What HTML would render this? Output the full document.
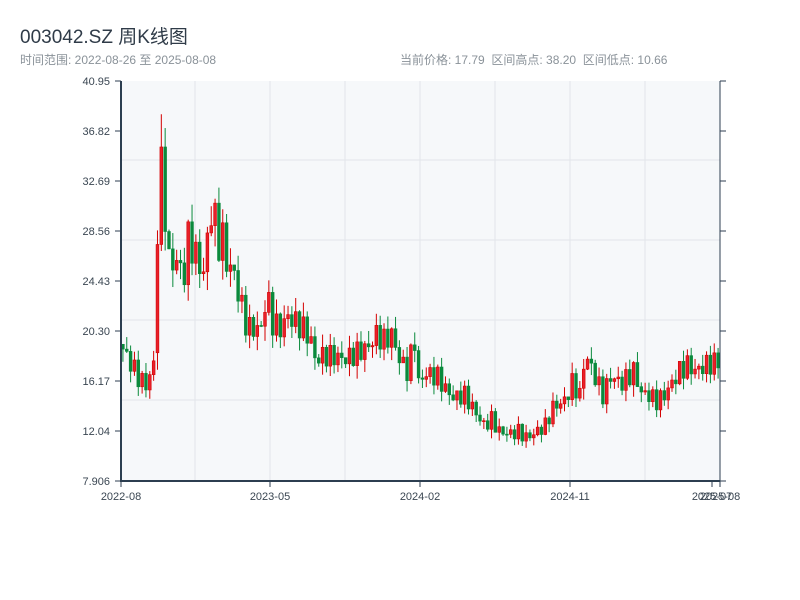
<!DOCTYPE html>
<html><head><meta charset="utf-8">
<style>
body{margin:0;width:800px;height:600px;background:#fff;font-family:"Liberation Sans","Noto Sans CJK SC",sans-serif;overflow:hidden;position:relative}
.t{position:absolute;left:20px;top:22px;font-size:19px;color:#2f3b48}
.s{position:absolute;top:51px;font-size:12px;color:#8a9299}
svg{position:absolute;left:0;top:0}
</style></head><body>
<div class="t">003042.SZ 周K线图</div>
<div class="s" style="left:20px">时间范围: 2022-08-26 至 2025-08-08</div>
<div class="s" style="left:400px">当前价格: 17.79 &nbsp;区间高点: 38.20 &nbsp;区间低点: 10.66</div>
<svg id="c" width="800" height="600" xmlns="http://www.w3.org/2000/svg"></svg>
<script>
var L=121,R=720,T=81,B=481,pmax=40.95,pmin=7.906;
function Y(p){return T+(pmax-p)*(B-T)/(pmax-pmin);}
var s='<rect x="'+L+'" y="'+T+'" width="'+(R-L)+'" height="'+(B-T)+'" fill="#f6f8fa"/>';
[160,240,320,400].forEach(function(y){s+='<line x1="'+L+'" x2="'+R+'" y1="'+y+'" y2="'+y+'" stroke="#e2e5ea" stroke-width="1"/>';});
[195,270,345,420,495,570,645].forEach(function(x){s+='<line y1="'+T+'" y2="'+B+'" x1="'+x+'" x2="'+x+'" stroke="#e2e5ea" stroke-width="1"/>';});
var kp=[[0,18.8],[4,16.5],[6,15.8],[8,17.5],[9,28.5],[10,35],[11,30],[12,26],[14,26],[16,25],[17,28],[19,26.5],[21,25],[22,28],[23,30],[24,29.5],[25,27.5],[26,28],[27,26],[29,25],[30,23.5],[32,21],[33,20.5],[36,20.5],[37,22.5],[38,22.5],[39,21],[41,20.5],[43,21.5],[45,21],[47,20.5],[49,19.5],[50,18],[53,18.3],[58,18],[61,18.5],[64,19],[66,20],[68,19.5],[70,20],[72,18],[74,17],[76,19.5],[77,16],[79,16.8],[82,16.5],[84,15.5],[86,14.8],[89,15],[91,14],[94,12.5],[96,13],[98,12],[101,11.8],[103,12],[105,11.5],[107,11.8],[110,12.5],[112,14],[115,14.5],[117,16],[119,15],[120,17.5],[121,18],[123,16.5],[125,15],[127,16.5],[130,16],[133,17],[135,15.2],[137,15],[139,14.5],[141,15],[143,16],[145,17],[147,17.5],[149,17],[152,17.5],[155,17.8]];
var N=156,cl=[];
for(var i=0;i<N;i++){var k=0;while(k<kp.length-1&&kp[k+1][0]<i)k++;var a=kp[k],b=kp[Math.min(k+1,kp.length-1)];var v=a[1];if(b[0]>a[0])v=a[1]+(b[1]-a[1])*(i-a[0])/(b[0]-a[0]);v+=Math.sin(i*2.7)*0.9*(v/18);cl.push(v);}
cl[10]=35.5;
var w=(R-L)/N;
for(var i=0;i<N;i++){
 var c=cl[i],o=i?cl[i-1]:19.2;
 if(i==9)o=18.5;
 var hi=Math.max(o,c)+Math.abs(Math.sin(i*1.3))*1.0*(c/18),lo=Math.min(o,c)-Math.abs(Math.cos(i*1.7))*1.0*(c/18);
 if(i==10)hi=38.2;
 var up=c>=o,col=up?'#d40000':'#0a8a3c';
 var x=L+i*w+w/2;
 s+='<line x1="'+x+'" x2="'+x+'" y1="'+Y(hi)+'" y2="'+Y(lo)+'" stroke="'+col+'" stroke-width="1"/>';
 var y1=Y(Math.max(o,c)),h=Math.max(1,Y(Math.min(o,c))-y1);
 s+='<rect x="'+(x-1.4)+'" y="'+y1+'" width="2.8" height="'+h+'" fill="'+(up?'#e8202a':col)+'" stroke="'+col+'" stroke-width="0.6"/>';
}
s+='<line x1="'+L+'" x2="'+L+'" y1="'+T+'" y2="'+(B+1)+'" stroke="#2c3e50" stroke-width="2"/>';
s+='<line x1="'+R+'" x2="'+R+'" y1="'+T+'" y2="'+B+'" stroke="#2c3e50" stroke-width="1"/>';
s+='<line x1="'+L+'" x2="'+R+'" y1="'+B+'" y2="'+B+'" stroke="#2c3e50" stroke-width="2"/>';
var labs=['40.95','36.82','32.69','28.56','24.43','20.30','16.17','12.04','7.906'];
for(var j=0;j<9;j++){var y=T+j*50;
 s+='<line x1="'+(L-6)+'" x2="'+L+'" y1="'+y+'" y2="'+y+'" stroke="#2c3e50"/>';
 s+='<line x1="'+R+'" x2="'+(R+6)+'" y1="'+y+'" y2="'+y+'" stroke="#2c3e50"/>';
 s+='<text x="'+(L-11)+'" y="'+(y+4)+'" font-size="11" fill="#3a4652" text-anchor="end" font-family="Liberation Sans">'+labs[j]+'</text>';}
[[121,'2022-08'],[270,'2023-05'],[420,'2024-02'],[570,'2024-11'],[712,'2025-07'],[720,'2025-08']].forEach(function(t){
 s+='<line x1="'+t[0]+'" x2="'+t[0]+'" y1="'+B+'" y2="'+(B+6)+'" stroke="#2c3e50"/>';
 s+='<text x="'+t[0]+'" y="'+(B+19)+'" font-size="11" fill="#3a4652" text-anchor="middle" font-family="Liberation Sans">'+t[1]+'</text>';});
document.getElementById('c').innerHTML=s;
</script>
</body></html>
